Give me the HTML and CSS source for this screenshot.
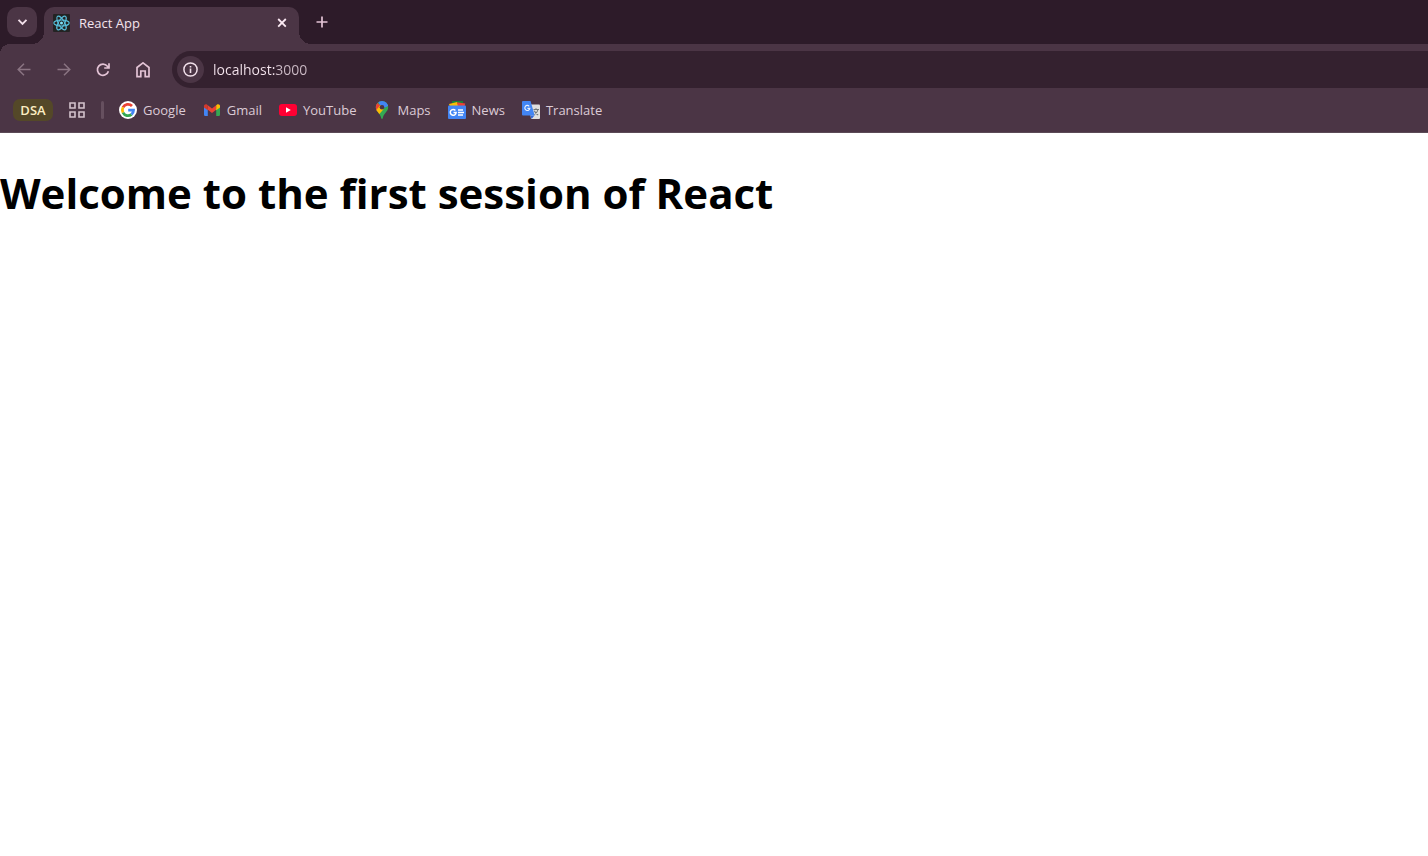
FILE: index.html
```html
<!DOCTYPE html>
<html lang="en">
<head>
<meta charset="utf-8">
<title>React App</title>
<link rel="stylesheet" href="styles.css">
</head>
<body>
<header class="browser">
  <div class="tab-strip">
    <button class="tab-search" aria-label="Search tabs">
      <svg width="12" height="12" viewBox="0 0 12 12"><path d="M2.500 3.800l4 4 4-4" fill="none" stroke="#f2dfea" stroke-width="1.900"/></svg>
    </button>
    <div class="tab">
      <svg class="favicon" width="17" height="18" viewBox="0 0 17 18">
        <rect width="17" height="18" rx="1" fill="#232323"/>
        <g fill="none" stroke="#58bfdc" stroke-width="1.1">
          <ellipse cx="8.5" cy="9" rx="7.7" ry="3"/>
          <ellipse cx="8.5" cy="9" rx="7.7" ry="3" transform="rotate(60 8.5 9)"/>
          <ellipse cx="8.5" cy="9" rx="7.7" ry="3" transform="rotate(120 8.5 9)"/>
        </g>
        <circle cx="8.5" cy="9" r="1.5" fill="#7fe0f7"/>
      </svg>
      <span class="tab-title">React App</span>
      <button class="tab-close" aria-label="Close tab">
        <svg width="10" height="10" viewBox="0 0 10 10"><path d="M1.200 1l7.600 7.600M8.800 1L1.200 8.600" stroke="#fbe9f3" stroke-width="1.800"/></svg>
      </button>
    </div>
    <button class="tab-new" aria-label="New tab">
      <svg width="12" height="12" viewBox="0 0 12 12"><path d="M6 .5v11M.5 6h11" stroke="#e3c3d5" stroke-width="1.7"/></svg>
    </button>
  </div>
  <div class="toolbar">
    <nav class="nav-buttons">
      <button class="nav-button" aria-label="Back">
        <svg width="14" height="14" viewBox="0 0 14 14"><path d="M13.5 6.500H1.5M7 .7L1.2 6.500 7 12.300" fill="none" stroke="#8a7482" stroke-width="1.5"/></svg>
      </button>
      <button class="nav-button" aria-label="Forward">
        <svg width="14" height="14" viewBox="0 0 14 14"><path d="M.5 6.500h12M7 .7L12.8 6.500 7 12.300" fill="none" stroke="#8a7482" stroke-width="1.5"/></svg>
      </button>
      <button class="nav-button" aria-label="Reload">
        <svg width="16" height="14" viewBox="0 0 16 14"><path d="M12.400 8.200A5.600 5.600 0 1 1 11.400 3.200L12.600 4.600M13 .2V5H8.200" fill="none" stroke="#e3c3d5" stroke-width="1.7"/></svg>
      </button>
      <button class="nav-button" aria-label="Home">
        <svg width="16" height="16" viewBox="0 0 16 16"><path d="M1 14.600V5.500L7 .9l6 4.600v9.100H9.200V9H4.800v5.600z" fill="none" stroke="#e3c3d5" stroke-width="1.7"/></svg>
      </button>
    </nav>
    <div class="address-bar">
      <button class="site-info" aria-label="View site information">
        <svg width="15" height="15" viewBox="0 0 15 15"><circle cx="7.5" cy="7.5" r="6.6" fill="none" stroke="#f0dfe9" stroke-width="1.5"/><path d="M7.5 6.6v4.4M7.5 3.9v1.6" stroke="#f0dfe9" stroke-width="1.6"/></svg>
      </button>
      <input class="address-input" type="text" aria-label="Address" value="localhost:3000">
    </div>
  </div>
  <nav class="bookmarks">
    <button class="group-chip">DSA</button>
    <button class="apps" aria-label="Apps">
      <svg width="16" height="16" viewBox="0 0 16 16"><path d="M1 1h5v5H1zM10 1h5v5h-5zM1 10h5v5H1zM10 10h5v5h-5z" fill="none" stroke="#d3c2cc" stroke-width="1.6"/></svg>
    </button>
    <span class="divider"></span>
    <a class="bookmark" href="#google">
      <svg width="18" height="18" viewBox="0 0 18 18">
        <circle cx="9" cy="9" r="9" fill="#fff"/>
        <g fill="none" stroke-width="2.800">
          <path d="M13 5A5.600 5.600 0 0 0 4 6.400" stroke="#ea4335"/>
          <path d="M4 6.400a5.600 5.600 0 0 0 0 5.200" stroke="#fbbc05"/>
          <path d="M4 11.600a5.600 5.600 0 0 0 8.500 1.800" stroke="#34a853"/>
          <path d="M12.500 13.400A5.600 5.600 0 0 0 14.500 9.200H9.200" stroke="#4285f4"/>
        </g>
      </svg>
      Google
    </a>
    <a class="bookmark" href="#gmail">
      <svg width="18" height="18" viewBox="0 0 18 18">
        <path d="M1 5.200l3.800 2.900V15H2.200A1.200 1.200 0 0 1 1 13.800z" fill="#4285f4"/>
        <path d="M17 5.200l-3.800 2.900V15h2.600a1.200 1.200 0 0 0 1.200-1.200z" fill="#34a853"/>
        <path d="M4.800 4.200L9 7.400l4.200-3.200v4.500L9 12 4.800 8.700z" fill="#ea4335"/>
        <path d="M13.200 4.200l.9-.7C15.300 2.600 17 3.500 17 5v1.600l-3.800 2.700z" fill="#fbbc04"/>
        <path d="M4.800 4.200l-.9-.7C2.700 2.600 1 3.500 1 5v1.600l3.800 2.700z" fill="#d33a2d"/>
      </svg>
      Gmail
    </a>
    <a class="bookmark" href="#youtube">
      <svg width="18" height="18" viewBox="0 0 18 18"><rect y="3" width="18" height="12" rx="3" fill="#ff0033"/><path d="M7 6.300v5.400L11.800 9z" fill="#fff"/></svg>
      YouTube
    </a>
    <a class="bookmark" href="#maps">
      <svg width="18" height="18" viewBox="0 0 18 18">
        <clipPath id="pin"><path d="M9 0a6.200 6.200 0 0 1 6.200 6.200c0 4.600-4.600 5.700-5.400 10.900-.2 1.200-1.400 1.200-1.600 0C7.400 11.900 2.800 10.800 2.800 6.200A6.200 6.200 0 0 1 9 0z"/></clipPath>
        <g clip-path="url(#pin)">
          <path d="M0 0h18v18H0z" fill="#34a853"/>
          <path d="M4-1h13v5L9 8z" fill="#4285f4"/>
          <path d="M0 0l4.200 1.800L9 6 3 12H0z" fill="#ea4335"/>
          <path d="M2 10.500L7.500 4l3 4.300L5.500 14z" fill="#fbbc04"/>
        </g>
        <circle cx="9" cy="6.200" r="2.300" fill="#4b3545"/>
      </svg>
      Maps
    </a>
    <a class="bookmark" href="#news">
      <svg width="18" height="18" viewBox="0 0 18 18">
        <path d="M4 0h11v5H4z" fill="#188038"/>
        <path d="M1 3l8-2 2 5H2z" fill="#fbbc04"/>
        <path d="M9 1.300l8.200 1.200L16.500 6H10z" fill="#ea4335"/>
        <rect y="4.500" width="18" height="13.500" rx="1" fill="#4285f4"/>
        <path d="M7.400 9.400A2.900 2.900 0 1 0 8.100 11.600H5.500" fill="none" stroke="#fff" stroke-width="1.500"/>
        <path d="M10 9h5M10 11.500h6M10 14h5" stroke="#fff" stroke-width="1.300"/>
      </svg>
      News
    </a>
    <a class="bookmark" href="#translate">
      <svg width="18" height="18" viewBox="0 0 18 18">
        <path d="M7 3.500h10a1 1 0 0 1 1 1V17a1 1 0 0 1-1 1H9z" fill="#dfdfdf"/>
        <path d="M8.500 14.500h4L9.500 18z" fill="#3367d6"/>
        <path d="M1 0h7.500l4.200 14.500H1a1 1 0 0 1-1-1V1a1 1 0 0 1 1-1z" fill="#4285f4"/>
        <path d="M7.200 5.300A2.500 2.500 0 1 0 7.800 7.400H5.400" fill="none" stroke="#e8f0fe" stroke-width="1.200"/>
        <path d="M11.500 8.500H17M14 7.200v1.300M16 8.500c-.4 2.500-2 4-3.600 5M12.300 9.800c.8 1.900 2.300 3.300 3.900 4.200" fill="none" stroke="#70787a" stroke-width="1.100"/>
      </svg>
      Translate
    </a>
  </nav>
</header>
<main class="page">
  <h1 class="welcome">Welcome to the first session of React</h1>
</main>
</body>
</html>
```
FILE: styles.css
```css
* {
  box-sizing: border-box;
}

body {
  margin: 0;
  background: #fff;
  font-family: "Open Sans", "Noto Sans", sans-serif;
}

button {
  display: flex;
  align-items: center;
  justify-content: center;
  flex: none;
  padding: 0;
  border: 0;
  background: none;
  font: inherit;
}

svg {
  display: block;
  flex: none;
}

.browser {
  background: #4b3545;
  border-bottom: 1px solid #5b4a56;
}

.tab-strip {
  display: flex;
  align-items: flex-start;
  height: 44px;
  padding: 7px 7px 0;
  background: #2d1b29;
}

.tab-search {
  width: 30px;
  height: 30px;
  margin-right: 7px;
  border-radius: 10px;
  background: #4b3545;
}

.tab {
  position: relative;
  display: flex;
  align-items: center;
  width: 255px;
  height: 37px;
  padding: 0 9px 6px;
  border-radius: 10px 10px 0 0;
  background: #4b3545;
}

.tab::before,
.tab::after {
  content: "";
  position: absolute;
  bottom: 0;
  width: 12px;
  height: 12px;
}

.tab::before {
  right: 100%;
  background: radial-gradient(circle at 0 0, transparent 12px, #4b3545 12px);
}

.tab::after {
  left: 100%;
  background: radial-gradient(circle at 100% 0, transparent 12px, #4b3545 12px);
}

.tab-title {
  flex: 1;
  margin-left: 9px;
  color: #f4e4ed;
  font-size: 13px;
  line-height: 18px;
}

.tab-close {
  width: 16px;
  height: 16px;
}

.tab-new {
  width: 30px;
  height: 30px;
  margin-left: 8px;
}

.toolbar {
  display: flex;
  align-items: center;
  gap: 11px;
  padding: 7px 0 0 7px;
  background: radial-gradient(circle at 10px 10px, #4b3545 10px, #2d1b29 10px) 0 0 / 10px 10px no-repeat;
}

.nav-buttons {
  display: flex;
  gap: 6px;
}

.nav-button {
  width: 34px;
  height: 34px;
}

.address-bar {
  display: flex;
  flex: 1;
  align-items: center;
  gap: 9px;
  height: 37px;
  padding-left: 5px;
  border-radius: 19px 0 0 19px;
  background: #34212f;
}

.site-info {
  width: 27px;
  height: 27px;
  border-radius: 50%;
  background: #4b3545;
}

.address-input {
  flex: 1;
  min-width: 0;
  padding: 0;
  border: 0;
  outline: 0;
  background: linear-gradient(90deg, #f6e6ef 62px, #cdbcc7 62px);
  background-clip: text;
  -webkit-background-clip: text;
  color: transparent;
  font: 14px/20px "Open Sans", "Noto Sans", sans-serif;
}

.bookmarks {
  display: flex;
  align-items: center;
  height: 44px;
  padding: 0 13px 1px;
  font-size: 13px;
  line-height: 18px;
}

.group-chip {
  width: 40px;
  height: 22px;
  border-radius: 7px;
  background: #544828;
  color: #fbeec2;
  font-weight: 600;
}

.apps {
  margin-left: 16px;
}

.divider {
  width: 3px;
  height: 18px;
  margin: 0 15px 0 16px;
  border-radius: 2px;
  background: #66505f;
}

.bookmark {
  display: flex;
  align-items: center;
  gap: 6px;
  margin-right: 17px;
  color: #dccbd6;
  text-decoration: none;
}

.page {
  padding: 30px 0;
}

.welcome {
  margin: 0;
  color: #000;
  font-size: 42px;
  font-weight: 700;
  line-height: 60px;
}
```
